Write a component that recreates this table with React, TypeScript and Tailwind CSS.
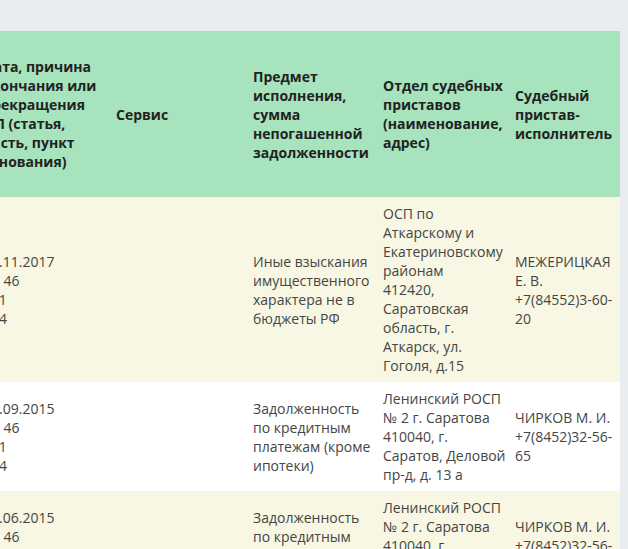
type Row = {
  info: string[];
  service: string;
  subject: string;
  department: string[];
  bailiff: string[];
};

const rows: Row[] = [
  {
    info: ["21.11.2017", "ст. 46", "ч. 1", "п. 4"],
    service: "",
    subject: "Иные взыскания имущественного характера не в бюджеты РФ",
    department: [
      "ОСП по Аткарскому и Екатериновскому районам",
      "412420, Саратовская область, г. Аткарск, ул. Гоголя, д.15",
    ],
    bailiff: ["МЕЖЕРИЦКАЯ Е. В.", "+7(84552)3-60-20"],
  },
  {
    info: ["22.09.2015", "ст. 46", "ч. 1", "п. 4"],
    service: "",
    subject: "Задолженность по кредитным платежам (кроме ипотеки)",
    department: [
      "Ленинский РОСП № 2 г. Саратова",
      "410040, г. Саратов, Деловой пр-д, д. 13 а",
    ],
    bailiff: ["ЧИРКОВ М. И.", "+7(8452)32-56-65"],
  },
  {
    info: ["30.06.2015", "ст. 46", "ч. 1", "п. 4"],
    service: "",
    subject: "Задолженность по кредитным платежам (кроме ипотеки)",
    department: [
      "Ленинский РОСП № 2 г. Саратова",
      "410040, г. Саратов, Деловой пр-д, д. 13 а",
    ],
    bailiff: ["ЧИРКОВ М. И.", "+7(8452)32-56-65"],
  },
];

const headers = [
  "Дата, причина окончания или прекращения ИП (статья, часть, пункт основания)",
  "Сервис",
  "Предмет исполнения, сумма непогашенной задолженности",
  "Отдел судебных приставов (наименование, адрес)",
  "Судебный пристав-исполнитель",
];

// widths of the visible columns; the first one is scrolled partly out of view
const widths = ["w-[133px]", "w-[137px]", "w-[130px]", "w-[132px]", "w-[111px]"];

const Lines = ({ items }: { items: string[] }) => (
  <>
    {items.map((t, i) => (
      <div key={i}>{t}</div>
    ))}
  </>
);

const cell = "pl-[6px] pr-[3px] py-[7px] align-middle";

export default function App() {
  return (
    <div
      className="min-h-screen bg-[#e9edf0] pt-[31px]"
      style={{ fontFamily: '"Open Sans", "Noto Sans", sans-serif' }}
    >
      <div className="w-[620px] overflow-hidden">
        <table className="ml-[-23px] table-fixed border-collapse text-[14px] leading-[19px]">
          <thead>
            <tr className="bg-[#a7e3bd] text-[#222]">
              {headers.map((h, i) => (
                <th
                  key={i}
                  className={`${widths[i]} pl-[6px] pr-[3px] py-[26px] text-left align-middle font-bold`}
                >
                  {h}
                </th>
              ))}
            </tr>
          </thead>
          <tbody className="text-[#454545]">
            {rows.map((r, i) => (
              <tr key={i} className={i % 2 === 0 ? "bg-[#f8f7e3]" : "bg-white"}>
                <td className={cell}>
                  <Lines items={r.info} />
                </td>
                <td className={cell}>{r.service}</td>
                <td className={cell}>{r.subject}</td>
                <td className={cell}>
                  <Lines items={r.department} />
                </td>
                <td className={cell}>
                  <Lines items={r.bailiff} />
                </td>
              </tr>
            ))}
          </tbody>
        </table>
      </div>
    </div>
  );
}
